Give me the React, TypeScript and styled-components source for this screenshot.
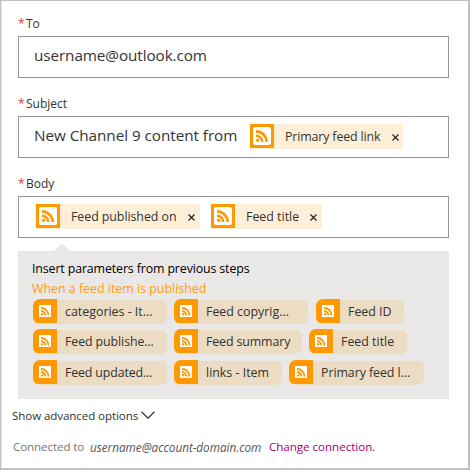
import React from "react";
import styled, { createGlobalStyle } from "styled-components";

const GlobalStyle = createGlobalStyle`
  * { box-sizing: border-box; }
  body {
    margin: 0;
    background: #fff;
    color: #333;
    font-family: "Open Sans", "Noto Sans", sans-serif;
  }
`;

const Card = styled.main`
  width: 470px;
  height: 470px;
  padding: 16px 19px 0 16px;
  border: solid #c1c1c1;
  border-width: 1px 2px 2px 1px;
  box-shadow: inset 1px 0 #e6e6e6;
  overflow: hidden;
  white-space: nowrap;
`;

const Field = styled.section`
  height: 80px;
  padding-left: 1px;
`;

const Label = styled.label`
  display: flex;
  height: 19px;
  font-size: 12px;
  line-height: 13px;
`;

const Required = styled.span`
  width: 8px;
  color: #e0383e;
  font-size: 12px;
`;

const Input = styled.div`
  display: flex;
  align-items: flex-start;
  height: 42px;
  padding: 7px 0 0 15px;
  border: 1px solid #969696;
`;

const Value = styled.span<{ $width?: number; $track?: number }>`
  flex: none;
  width: ${(p) => (p.$width ? `${p.$width}px` : "auto")};
  font-size: 15.3px;
  line-height: 23px;
  letter-spacing: ${(p) => p.$track ?? 0}px;
`;

const Token = styled.span<{ $width: number; $gap: number }>`
  display: flex;
  flex: none;
  width: ${(p) => p.$width}px;
  height: 25px;
  margin-left: ${(p) => p.$gap}px;
  background: #ffefd9;
`;

const TokenText = styled.span<{ $width: number; $track?: number }>`
  flex: none;
  width: ${(p) => p.$width}px;
  margin-left: 11px;
  font-size: 12.4px;
  line-height: 25px;
  letter-spacing: ${(p) => p.$track ?? 0}px;
`;

const Remove = styled.svg`
  flex: none;
  width: 7px;
  height: 7px;
  margin: 10px 0 0 11px;
`;

const IconTile = styled.svg`
  flex: none;
  width: 24px;
  height: 24px;
`;

const Pointer = styled.div`
  width: 0;
  height: 8px;
  margin: -14px 0 0 37px;
  border: solid transparent;
  border-width: 0 8px 8px;
  border-bottom-color: #e9e8e7;
`;

const Panel = styled.section`
  height: 148px;
  margin-left: 1px;
  padding: 8px 0 0 14px;
  background: #e9e8e7;
`;

const PanelTitle = styled.h2<{ $track?: number }>`
  margin: 0;
  color: #000;
  font-size: 12.4px;
  font-weight: 400;
  line-height: 20px;
  letter-spacing: ${(p) => p.$track ?? 0}px;
`;

const Source = styled(PanelTitle)`
  color: #ff9b0d;
`;

const PillRow = styled.div<{ $height: number }>`
  display: flex;
  height: ${(p) => p.$height}px;
  padding-left: 1px;
`;

const Pill = styled.button<{ $width: number; $gap?: number; $track?: number }>`
  display: flex;
  width: ${(p) => p.$width}px;
  height: 25px;
  margin: 0 0 0 ${(p) => p.$gap ?? 0}px;
  padding: 0;
  border: 0;
  background: linear-gradient(#ecdcc3, #ecdcc3) 0 1px / 100% 24px no-repeat;
  border-radius: 7px;
  color: #333;
  font: 12.4px/25px "Open Sans", "Noto Sans", sans-serif;
  letter-spacing: ${(p) => p.$track ?? 0}px;
  text-align: left;
  overflow: hidden;

  span { margin-left: 8px; }
`;

const Advanced = styled.div`
  display: flex;
  align-items: center;
  height: 20px;
  margin: 6px 0 0 -5px;
  font-size: 11.6px;
  letter-spacing: -0.1px;
`;

const Chevron = styled.svg`
  width: 14px;
  height: 8px;
  margin-left: 3px;
`;

const Footer = styled.footer`
  display: flex;
  height: 20px;
  margin: 12px 0 0 -4px;
  color: #767676;
  font-size: 11.6px;
  line-height: 20px;
`;

const Part = styled.span<{ $width: number; $track?: number }>`
  flex: none;
  width: ${(p) => p.$width}px;
  letter-spacing: ${(p) => p.$track ?? 0}px;
`;

const Account = styled(Part)`
  color: #555;
  font-size: 11.8px;
`;

const Change = styled.a`
  color: #a4006f;
  letter-spacing: -0.03px;
`;

const Waves = () => (
  <>
    <circle cx="1.7" cy="10.3" r="1.7" />
    <path d="M0 5.7A6.3 6.3 0 0 1 6.3 12M0 1.4A10.6 10.6 0 0 1 10.6 12" fill="none" stroke="#ff9900" strokeWidth="2.6" />
  </>
);

const FeedIcon = () => (
  <IconTile viewBox="0 0 24 24">
    <rect width="24" height="24" fill="#ff9900" />
    <rect x="3" y="3" width="18" height="18" rx="2" fill="#fff" />
    <g transform="translate(6 6)" fill="#ff9900"><Waves /></g>
  </IconTile>
);

const SmallFeedIcon = () => (
  <IconTile viewBox="0 0 24 24">
    <rect width="24" height="24" fill="#ff9900" />
    <rect x="6" y="6" width="12" height="12" rx=".5" fill="#fff" />
    <g transform="translate(8 8) scale(.7)" fill="#ff9900"><Waves /></g>
  </IconTile>
);

type TokenProps = { text: string; width: number; textWidth: number; gap: number; track?: number };

const FeedToken = ({ text, width, textWidth, gap, track }: TokenProps) => (
  <Token $width={width} $gap={gap}>
    <FeedIcon />
    <TokenText $width={textWidth} $track={track}>{text}</TokenText>
    <Remove viewBox="0 0 7 7"><path d="M.5.5l6 6M6.5.5l-6 6" stroke="#222" strokeWidth="1.2" /></Remove>
  </Token>
);

type PillData = { text: string; width: number; gap?: number; track?: number };

const rows: { height: number; pills: PillData[] }[] = [
  { height: 30, pills: [
    { text: "categories - It...", width: 134 },
    { text: "Feed copyrig...", width: 134, gap: 7 },
    { text: "Feed ID", width: 88, gap: 8 },
  ] },
  { height: 31, pills: [
    { text: "Feed publishe...", width: 134, track: -0.1 },
    { text: "Feed summary", width: 128, gap: 7, track: -0.12 },
    { text: "Feed title", width: 98, gap: 7 },
  ] },
  { height: 25, pills: [
    { text: "Feed updated...", width: 134, track: -0.15 },
    { text: "links - Item", width: 108, gap: 7 },
    { text: "Primary feed l...", width: 135, gap: 7, track: -0.07 },
  ] },
];

export default function App() {
  return (
    <>
      <GlobalStyle />
      <Card>
        <Field>
          <Label><Required>*</Required>To</Label>
          <Input><Value $track={-0.1}>username@outlook.com</Value></Input>
        </Field>
        <Field>
          <Label><Required>*</Required>Subject</Label>
          <Input>
            <Value $width={203} $track={-0.06}>New Channel 9 content from</Value>
            <FeedToken text="Primary feed link" width={153} textWidth={96} gap={13} track={-0.14} />
          </Input>
        </Field>
        <Field>
          <Label><Required>*</Required>Body</Label>
          <Input>
            <FeedToken text="Feed published on" width={164} textWidth={106} gap={2} track={-0.06} />
            <FeedToken text="Feed title" width={111} textWidth={53} gap={11} />
          </Input>
        </Field>
        <Pointer />
        <Panel>
          <PanelTitle $track={-0.13}>Insert parameters from previous steps</PanelTitle>
          <Source as="h3">When a feed item is published</Source>
          {rows.map((row, i) => (
            <PillRow key={i} $height={row.height}>
              {row.pills.map((p) => (
                <Pill key={p.text} $width={p.width} $gap={p.gap} $track={p.track}>
                  <SmallFeedIcon />
                  <span>{p.text}</span>
                </Pill>
              ))}
            </PillRow>
          ))}
        </Panel>
        <Advanced>
          Show advanced options
          <Chevron viewBox="0 0 14 8"><path d="M.5.8L7 7.2 13.5.8" fill="none" stroke="#333" strokeWidth="1.2" /></Chevron>
        </Advanced>
        <Footer>
          <Part $width={77} $track={-0.1}>Connected to</Part>
          <Account as="em" $width={179} $track={-0.05}>username@account-domain.com</Account>
          <Change>Change connection.</Change>
        </Footer>
      </Card>
    </>
  );
}
